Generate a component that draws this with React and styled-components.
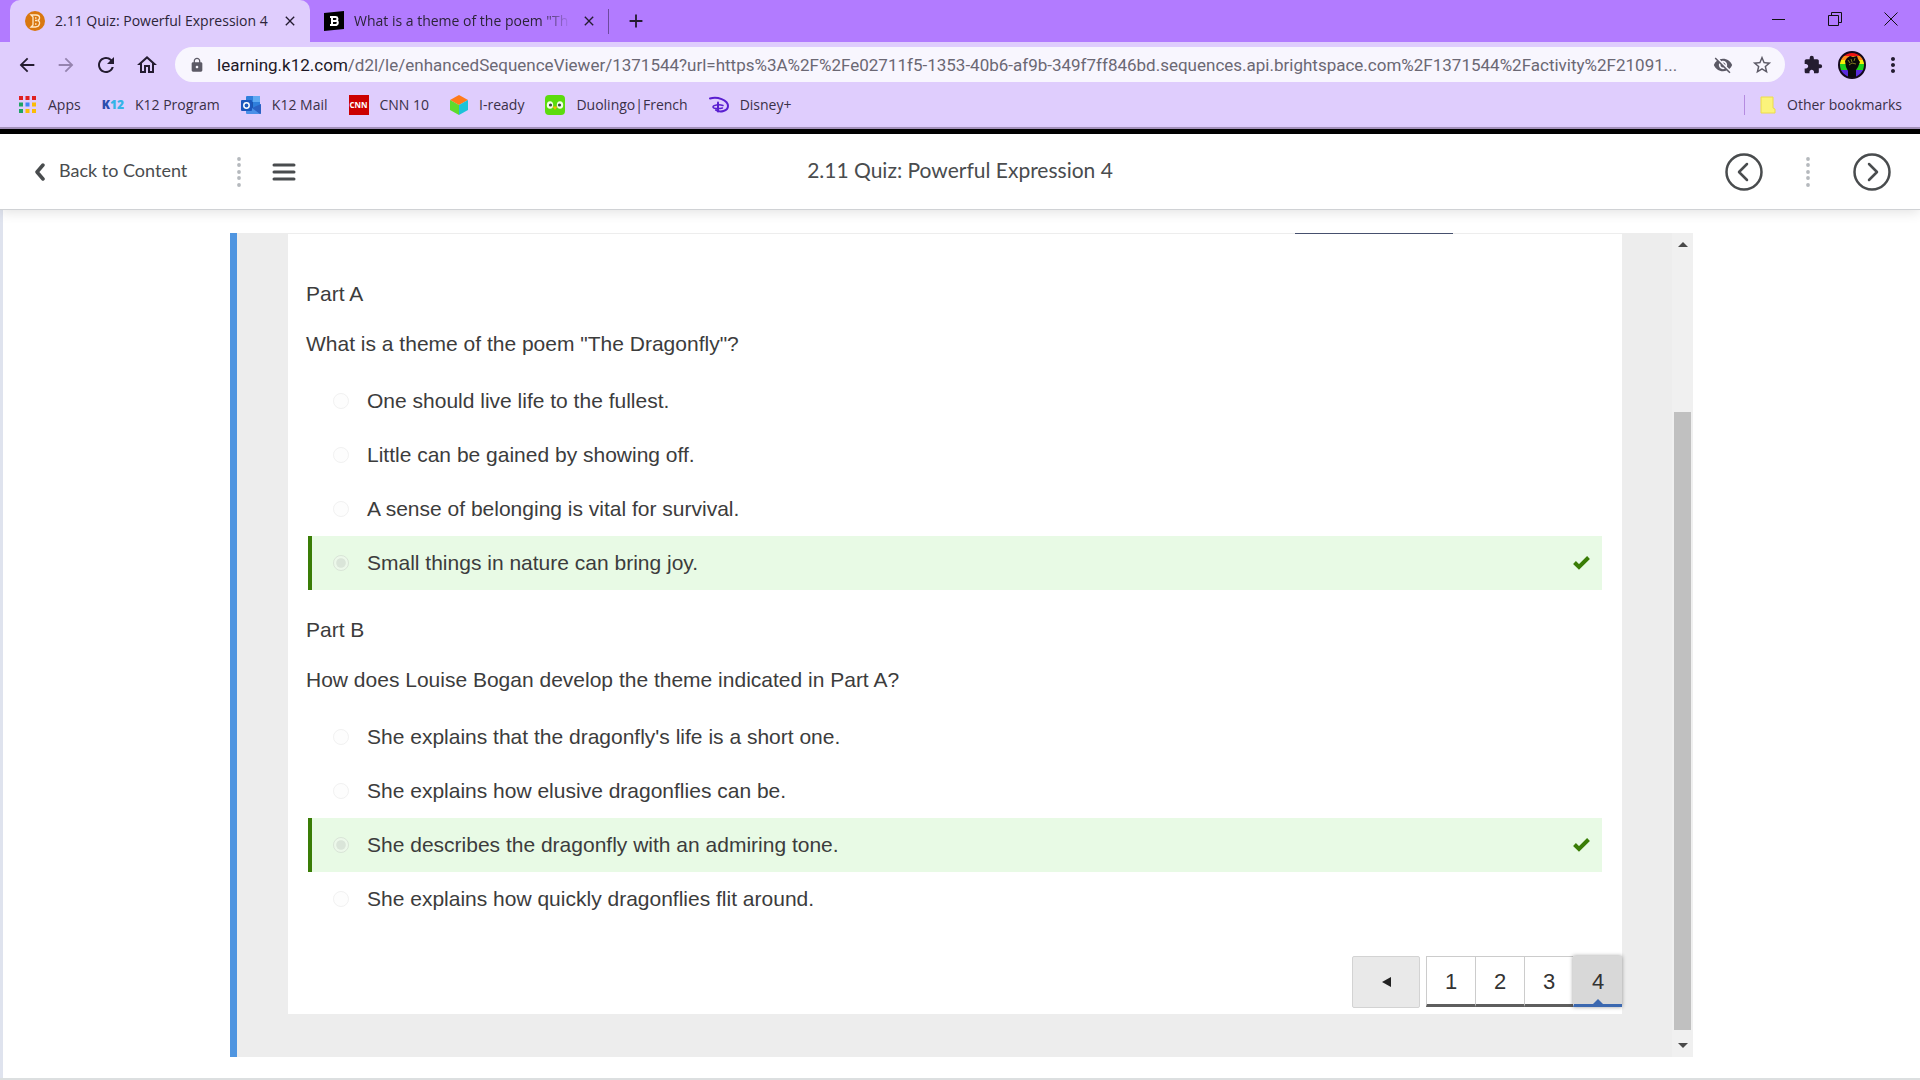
import React from 'react';
import styled, { createGlobalStyle } from 'styled-components';
import { MdArrowBack, MdArrowForward, MdRefresh, MdOutlineHome, MdLock, MdVisibilityOff, MdStarBorder, MdExtension, MdMoreVert, MdClose, MdAdd } from 'react-icons/md';

const parts = [
  {
    id: 'a',
    title: 'Part A',
    question: 'What is a theme of the poem "The Dragonfly"?',
    answer: 3,
    options: [
      'One should live life to the fullest.',
      'Little can be gained by showing off.',
      'A sense of belonging is vital for survival.',
      'Small things in nature can bring joy.',
    ],
  },
  {
    id: 'b',
    title: 'Part B',
    question: 'How does Louise Bogan develop the theme indicated in Part A?',
    answer: 2,
    options: [
      "She explains that the dragonfly's life is a short one.",
      'She explains how elusive dragonflies can be.',
      'She describes the dragonfly with an admiring tone.',
      'She explains how quickly dragonflies flit around.',
    ],
  },
];

const AppsIcon = () => (
  <svg width="18" height="18" viewBox="0 0 18 18">
    {['#e02020', '#e02020', '#e02020', '#1fa463', '#4286f5', '#fbbc05', '#1fa463', '#fbbc05', '#fbbc05'].map((c, i) => (
      <rect key={i} x={(i % 3) * 6.5} y={Math.floor(i / 3) * 6.5} width="4" height="4" fill={c} />
    ))}
  </svg>
);

const K12Icon = () => (
  <K12Mark><b>K</b>12</K12Mark>
);

const OutlookIcon = () => (
  <svg width="20" height="20" viewBox="0 0 20 20">
    <rect x="5" y="1" width="14" height="13" rx="1" fill="#2f7fdc" />
    <rect x="12" y="1" width="7" height="6" fill="#5fa9f2" />
    <rect x="5" y="7" width="7" height="6" fill="#1d55b0" />
    <path d="M5 9l8 5 7-5v9a1 1 0 0 1-1 1H6a1 1 0 0 1-1-1z" fill="#4a90e8" />
    <path d="M20 9v9a1 1 0 0 1-1 1l-8-6z" fill="#2a62c4" />
    <rect x="0" y="5" width="11" height="11" rx="1" fill="#1c57bd" />
    <circle cx="5.5" cy="10.5" r="2.7" fill="none" stroke="#fff" strokeWidth="1.5" />
  </svg>
);

const ReadyIcon = () => (
  <svg width="18" height="20" viewBox="0 0 18 20">
    <path d="M9 0l9 5-9 5-9-5z" fill="#ff7a1a" />
    <path d="M0 5l9 5v10l-9-5z" fill="#5ddb2c" />
    <path d="M18 5l-9 5v10l9-5z" fill="#1cc3d8" />
  </svg>
);

const DuoIcon = () => (
  <svg width="20" height="20" viewBox="0 0 20 20">
    <rect width="20" height="20" rx="4" fill="#5bdc0c" />
    <ellipse cx="5" cy="10" rx="3.2" ry="3.8" fill="#f3fde8" />
    <ellipse cx="15" cy="10" rx="3.2" ry="3.8" fill="#f3fde8" />
    <circle cx="5.5" cy="10" r="1.6" fill="#3c4b3c" />
    <circle cx="14.5" cy="10" r="1.6" fill="#3c4b3c" />
    <path d="M7.500 11.500h5L10 15z" fill="#f6b800" />
  </svg>
);

const DisneyIcon = () => (
  <svg width="20" height="18" viewBox="0 0 20 18" fill="none" stroke="#5a1fd0" strokeWidth="2" strokeLinecap="round">
    <path d="M1 2.500C8 0 19 4 19 10c0 5-8 7-12 4" />
    <path d="M9 6.500v9" />
    <path d="M14 9.500C10 8 4 9 4 11c0 1.500 5 2 9.500 1" strokeWidth="1.500" />
  </svg>
);

const FolderIcon = () => (
  <svg width="16" height="18" viewBox="0 0 16 18">
    <path d="M1 1h12v11l2 1v4H1z" fill="#fbf37b" stroke="#ecdc4a" />
  </svg>
);

const BrightspaceIcon = () => (
  <svg width="20" height="20" viewBox="0 0 20 20">
    <circle cx="10" cy="10" r="10" fill="#d9770f" />
    <path d="M6 4h5c5 0 4 5 1.500 5.500C16 10 15 16 10.500 16H6l2-2V6zM10 7h1.500M10 9.500h2M10 13h1.500" fill="none" stroke="#ffe9c7" strokeWidth="1.300" />
  </svg>
);

const BrainlyIcon = () => (
  <svg width="20" height="20" viewBox="0 0 20 20">
    <path d="M0 2l20-2v18L0 20z" fill="#000" />
    <path d="M6 6h5.500c2.500 0 2.500 3 .8 3.700 2.200.5 2 4.300-1 4.300H6M8 6v8" fill="none" stroke="#fff" strokeWidth="2" />
    <path d="M8 10h4" stroke="#fff" strokeWidth="2" />
  </svg>
);

const AvatarIcon = () => (
  <svg width="28" height="28" viewBox="0 0 28 28">
    <defs>
      <clipPath id="avatar-clip"><circle cx="14" cy="14" r="13" /></clipPath>
    </defs>
    <g clipPath="url(#avatar-clip)">
      <rect width="28" height="6" fill="#f01414" />
      <rect y="5" width="28" height="5" fill="#ff8c1a" />
      <rect y="9" width="28" height="5" fill="#f5f00a" />
      <rect y="13" width="28" height="6" fill="#1ed11e" />
      <rect y="19" width="28" height="9" fill="#5a2bdc" />
      <path d="M7 10l2-3 3-2 3 1 4-1 1 3 2 3-2 5-2 3v9h-8v-8l-2-4z" fill="#0a0a0a" />
      <path d="M10 9l2 3M13 8l1 3M17 7l-1 3M11 14l3-2 4 1" fill="none" stroke="#7f7a1e" strokeWidth="1" />
    </g>
    <circle cx="14" cy="14" r="13" fill="none" stroke="#14081c" strokeWidth="2" />
  </svg>
);

const bookmarks = [
  { name: 'Apps', icon: <AppsIcon /> },
  { name: 'K12 Program', icon: <K12Icon /> },
  { name: 'K12 Mail', icon: <OutlookIcon /> },
  { name: 'CNN 10', icon: 'cnn' },
  { name: 'I-ready', icon: <ReadyIcon /> },
  { name: 'Duolingo|French', icon: <DuoIcon /> },
  { name: 'Disney+', icon: <DisneyIcon /> },
];

const Chevron = ({ right }) => (
  <svg width="38" height="38" viewBox="0 0 38 38" fill="none" stroke="#494c4e" strokeWidth="2.500" strokeLinecap="round" strokeLinejoin="round">
    <circle cx="19" cy="19" r="17.500" />
    <path d={right ? 'M16 11l8 8-8 8' : 'M22 11l-8 8 8 8'} />
  </svg>
);

const DotDivider = () => (
  <svg width="4" height="30" viewBox="0 0 4 30" fill="#b5b9bd">
    {[2, 8, 15, 21, 28].map(y => <circle key={y} cx="2" cy={y} r="1.900" />)}
  </svg>
);

const BrowserChrome = () => (
  <Chrome>
    <TabStrip>
      <Tab $active>
        <BrightspaceIcon />
        <TabTitle>2.11 Quiz: Powerful Expression 4</TabTitle>
        <IconButton aria-label="Close tab"><MdClose size={16} /></IconButton>
      </Tab>
      <Tab>
        <BrainlyIcon />
        <TabTitle $fade>What is a theme of the poem "Th</TabTitle>
        <IconButton aria-label="Close tab"><MdClose size={16} /></IconButton>
      </Tab>
      <TabDivider />
      <IconButton aria-label="New tab"><MdAdd size={22} /></IconButton>
      <WindowControls>
        <IconButton aria-label="Minimize">
          <svg width="14" height="14" stroke="#111"><path d="M0 7.500h13" /></svg>
        </IconButton>
        <IconButton aria-label="Restore">
          <svg width="14" height="14" fill="none" stroke="#111"><path d="M.5 3.500h10v10H.5zM3.500 3.500v-3h10v10h-3" /></svg>
        </IconButton>
        <IconButton aria-label="Close">
          <svg width="14" height="14" stroke="#111"><path d="M.5.5l13 13M13.500.5l-13 13" /></svg>
        </IconButton>
      </WindowControls>
    </TabStrip>
    <NavRow>
      <NavButtons>
        <IconButton aria-label="Back"><MdArrowBack size={22} /></IconButton>
        <IconButton aria-label="Forward" $muted><MdArrowForward size={22} /></IconButton>
        <IconButton aria-label="Reload"><MdRefresh size={24} /></IconButton>
        <IconButton aria-label="Home"><MdOutlineHome size={24} /></IconButton>
      </NavButtons>
      <AddressBar>
        <MdLock size={16} />
        <Url><span>learning.k12.com</span>/d2l/le/enhancedSequenceViewer/1371544?url=https%3A%2F%2Fe02711f5-1353-40b6-af9b-349f7ff846bd.sequences.api.brightspace.com%2F1371544%2Factivity%2F21091...</Url>
        <IconButton aria-label="Third-party cookies blocked" $soft><MdVisibilityOff size={20} /></IconButton>
        <IconButton aria-label="Bookmark this page" $soft><MdStarBorder size={22} /></IconButton>
      </AddressBar>
      <BrowserActions>
        <IconButton aria-label="Extensions"><MdExtension size={20} /></IconButton>
        <IconButton aria-label="Profile"><AvatarIcon /></IconButton>
        <IconButton aria-label="Menu"><MdMoreVert size={24} /></IconButton>
      </BrowserActions>
    </NavRow>
    <BookmarkBar>
      {bookmarks.map(b => (
        <Bookmark href="#" key={b.name}>
          {b.icon === 'cnn' ? <CnnMark>CNN</CnnMark> : b.icon}
          {b.name}
        </Bookmark>
      ))}
      <OtherBookmarks>
        <Bookmark href="#"><FolderIcon />Other bookmarks</Bookmark>
      </OtherBookmarks>
    </BookmarkBar>
  </Chrome>
);

const QuestionPart = ({ part }) => (
  <Part>
    <PartTitle>{part.title}</PartTitle>
    <Question id={`question-${part.id}`}>{part.question}</Question>
    <Options role="radiogroup" aria-labelledby={`question-${part.id}`}>
      {part.options.map((text, i) => (
        <Option key={text} $correct={i === part.answer}>
          <Radio type="radio" name={part.id} defaultChecked={i === part.answer} disabled />
          <OptionText>{text}</OptionText>
          {i === part.answer && (
            <svg width="17" height="14" viewBox="0 0 17 14" fill="none" stroke="#3a7d06" strokeWidth="4">
              <path d="M1.500 6.500l4.500 4.500L15.500 1.500" />
            </svg>
          )}
        </Option>
      ))}
    </Options>
  </Part>
);

export default function App() {
  return (
    <Page>
      <GlobalStyle />
      <BrowserChrome />
      <Header>
        <HeaderLeft>
          <BackLink href="#">
            <svg width="12" height="18" viewBox="0 0 12 18" fill="none" stroke="#494c4e" strokeWidth="3.500" strokeLinecap="round" strokeLinejoin="round"><path d="M9 2L3 9l6 7" /></svg>
            <BackText>Back to Content</BackText>
          </BackLink>
          <DotDivider />
          <IconButton aria-label="Open navigation">
            <svg width="24" height="18" viewBox="0 0 24 18" stroke="#494c4e" strokeWidth="3" strokeLinecap="round"><path d="M2 2h20M2 9h20M2 16h20" /></svg>
          </IconButton>
        </HeaderLeft>
        <HeaderTitle>2.11 Quiz: Powerful Expression 4</HeaderTitle>
        <HeaderRight>
          <IconButton aria-label="Previous"><Chevron /></IconButton>
          <DotDivider />
          <IconButton aria-label="Next"><Chevron right /></IconButton>
        </HeaderRight>
      </Header>
      <Content>
        <Frame>
          <Card>
            <TabUnderline />
            {parts.map(part => <QuestionPart key={part.id} part={part} />)}
            <Pager aria-label="Question pages">
              <PrevButton aria-label="Previous question">
                <svg width="9" height="10" fill="#222"><path d="M9 0v10L0 5z" /></svg>
              </PrevButton>
              <PageList>
                {[1, 2, 3, 4].map(n => <PageButton key={n} $current={n === 4}>{n}</PageButton>)}
              </PageList>
            </Pager>
          </Card>
          <Scrollbar>
            <svg width="10" height="5" fill="#494949"><path d="M0 5h10L5 0z" /></svg>
            <Thumb />
            <svg width="10" height="5" fill="#494949"><path d="M0 0h10L5 5z" /></svg>
          </Scrollbar>
        </Frame>
      </Content>
      <BottomEdge />
    </Page>
  );
}

const GlobalStyle = createGlobalStyle`
  * {
    box-sizing: border-box;
  }

  body {
    margin: 0;
    background: #fff;
  }
`;

const Page = styled.div`
  display: flex;
  flex-direction: column;
  min-height: 100vh;
  overflow: hidden;
  font-family: "Liberation Sans", Arial, sans-serif;
`;

const Chrome = styled.div`
  background: #dfcdfd;
  border-bottom: 5px solid #000;
  box-shadow: inset 0 -2px 0 #a592bb;
  font-family: "Open Sans", "Noto Sans", sans-serif;
  color: #2c2438;
`;

const IconButton = styled.button`
  display: flex;
  align-items: center;
  justify-content: center;
  padding: 0;
  border: none;
  background: none;
  cursor: pointer;
  color: ${props => (props.$muted ? '#9583ae' : props.$soft ? '#5c5a66' : '#241c30')};
`;

const TabStrip = styled.div`
  display: flex;
  align-items: center;
  height: 42px;
  padding-left: 10px;
  background: #b27bff;
`;

const Tab = styled.div`
  display: flex;
  align-items: center;
  gap: 10px;
  width: ${props => (props.$active ? '300px' : '288px')};
  height: 42px;
  padding: ${props => (props.$active ? '0 12px 0 15px' : '0 1px 0 14px')};
  border-radius: 10px 10px 0 0;
  background: ${props => (props.$active ? '#dfcdfd' : 'transparent')};
`;

const TabTitle = styled.span`
  flex: 1;
  min-width: 0;
  padding-bottom: 2px;
  white-space: nowrap;
  font-size: 14px;
  ${props => props.$fade && `
    mask-image: linear-gradient(to right, #000 86%, transparent);
  `}
`;

const TabDivider = styled.div`
  width: 1px;
  height: 25px;
  margin: 0 16px 0 10px;
  background: #6d4a9e;
`;

const WindowControls = styled.div`
  display: flex;
  gap: 42px;
  margin: 0 22px 4px auto;
`;

const NavRow = styled.div`
  display: flex;
  align-items: center;
  height: 45px;
  padding-right: 15px;
`;

const NavButtons = styled.div`
  display: flex;
  justify-content: space-between;
  width: 175px;
  padding: 0 16px;
`;

const AddressBar = styled.div`
  display: flex;
  align-items: center;
  flex: 1;
  min-width: 0;
  height: 35px;
  padding: 0 12px 0 14px;
  border-radius: 18px;
  background: #f8f6fe;
  color: #5c5a66;

  ${IconButton} {
    margin-left: 18px;
  }
`;

const Url = styled.div`
  flex: 1;
  min-width: 0;
  margin-left: 12px;
  white-space: nowrap;
  font-family: Roboto, sans-serif;
  font-size: 17px;
  line-height: 24px;
  color: #6b6874;

  span {
    color: #1d1826;
  }
`;

const BrowserActions = styled.div`
  display: flex;
  align-items: center;
  gap: 15px;
  margin-left: 18px;
`;

const BookmarkBar = styled.div`
  display: flex;
  align-items: center;
  gap: 21px;
  height: 42px;
  padding: 0 18px 6px 19px;
`;

const Bookmark = styled.a`
  display: flex;
  align-items: center;
  gap: 11px;
  font-size: 14px;
  line-height: 20px;
  white-space: nowrap;
  color: #3a3048;
  text-decoration: none;
`;

const OtherBookmarks = styled.div`
  display: flex;
  align-items: center;
  height: 20px;
  margin-left: auto;
  padding-left: 15px;
  border-left: 1px solid #b58be0;
`;

const K12Mark = styled.span`
  font-size: 12px;
  font-weight: 800;
  color: #35b4e6;

  b {
    color: #2a4cae;
  }
`;

const CnnMark = styled.span`
  width: 20px;
  height: 20px;
  background: #c00;
  color: #fff;
  font-size: 8px;
  font-weight: 700;
  text-align: center;
`;

const Header = styled.header`
  display: grid;
  grid-template-columns: 1fr auto 1fr;
  align-items: center;
  height: 76px;
  padding: 0 29px;
  border-bottom: 1px solid #d0d2d5;
  box-shadow: 0 2px 12px rgba(0, 0, 0, 0.12);
  font-family: Lato, sans-serif;
  color: #494c4e;
  z-index: 1;
`;

const HeaderLeft = styled.div`
  display: flex;
  align-items: center;
  gap: 31px;
  padding-left: 5px;
`;

const BackLink = styled.a`
  display: flex;
  align-items: center;
  gap: 13px;
  margin-right: 19px;
  color: #494c4e;
  text-decoration: none;
`;

const BackText = styled.span`
  padding-bottom: 3px;
  font-size: 18px;
`;

const HeaderTitle = styled.h1`
  margin: 0;
  padding-bottom: 4px;
  font-size: 21px;
  font-weight: 400;
`;

const HeaderRight = styled.div`
  display: flex;
  align-items: center;
  justify-content: flex-end;
  gap: 43px;
`;

const Content = styled.main`
  flex: 1;
  padding: 23px 227px 20px;
  border-left: 3px solid #dfe3ee;
`;

const Frame = styled.div`
  display: flex;
  border-left: 7px solid #4f95e0;
  background: #ededed;
`;

const Card = styled.section`
  position: relative;
  flex: 1;
  margin: 1px 50px 43px 51px;
  padding: 45px 0 6px;
  background: #fff;
`;

const TabUnderline = styled.div`
  position: absolute;
  top: -1px;
  right: 169px;
  width: 158px;
  height: 1px;
  background: #46506e;
`;

const Part = styled.div`
  padding: 0 20px 15px 18px;
`;

const PartTitle = styled.h2`
  margin: 0 0 20px;
  font-size: 21px;
  font-weight: 400;
  line-height: 30px;
  color: #3c3c3c;
`;

const Question = styled.p`
  margin: 0 0 15px;
  font-size: 21px;
  line-height: 30px;
  color: #3c3c3c;
`;

const Options = styled.div`
  display: flex;
  flex-direction: column;
  padding: 0 0 10px 2px;
`;

const Option = styled.label`
  display: flex;
  align-items: center;
  height: 54px;
  padding: 0 12px 0 21px;
  border-left: 4px solid ${props => (props.$correct ? '#3a7d06' : 'transparent')};
  background: ${props => (props.$correct ? '#e8fae5' : 'transparent')};
`;

const Radio = styled.input`
  width: 16px;
  height: 16px;
  margin: 0 18px 0 0;
  opacity: 0.3;

  &:checked {
    opacity: 0.5;
  }
`;

const OptionText = styled.span`
  flex: 1;
  font-size: 21px;
  line-height: 24px;
  color: #3c3c3c;
`;

const Pager = styled.nav`
  display: flex;
  justify-content: flex-end;
  gap: 6px;
  padding-top: 5px;
`;

const PrevButton = styled.button`
  width: 68px;
  height: 52px;
  border: 1px solid #d3d3d3;
  border-radius: 2px;
  background: #e9e9e9;
`;

const PageList = styled.div`
  display: flex;
`;

const PageButton = styled.button`
  position: relative;
  width: 49px;
  height: 51px;
  padding: 2px 0 0;
  border: 1px solid #ccc;
  border-right-width: 0;
  border-bottom: 3px solid #5e5e5e;
  background: #fff;
  color: #333;
  font-family: inherit;
  font-size: 22px;

  ${props => props.$current && `
    border-color: #d8d8d8;
    border-bottom-color: #3b68b0;
    background: #d8d8d8;
    box-shadow: 0 0 4px rgba(0, 0, 0, 0.4);

    &::after {
      content: '';
      position: absolute;
      bottom: 0;
      left: 50%;
      margin-left: -5px;
      border: 5px solid transparent;
      border-top-width: 0;
      border-bottom-color: #3b68b0;
    }
  `}
`;

const Scrollbar = styled.div`
  display: flex;
  flex-direction: column;
  align-items: center;
  width: 21px;
  padding: 9px 0;
  background: #f0f0f0;
`;

const Thumb = styled.div`
  flex: 1;
  width: 17px;
  margin: 165px 0 13px;
  background: #c0c0c0;
`;

const BottomEdge = styled.div`
  height: 2px;
  background: #dcdfe0;
`;
